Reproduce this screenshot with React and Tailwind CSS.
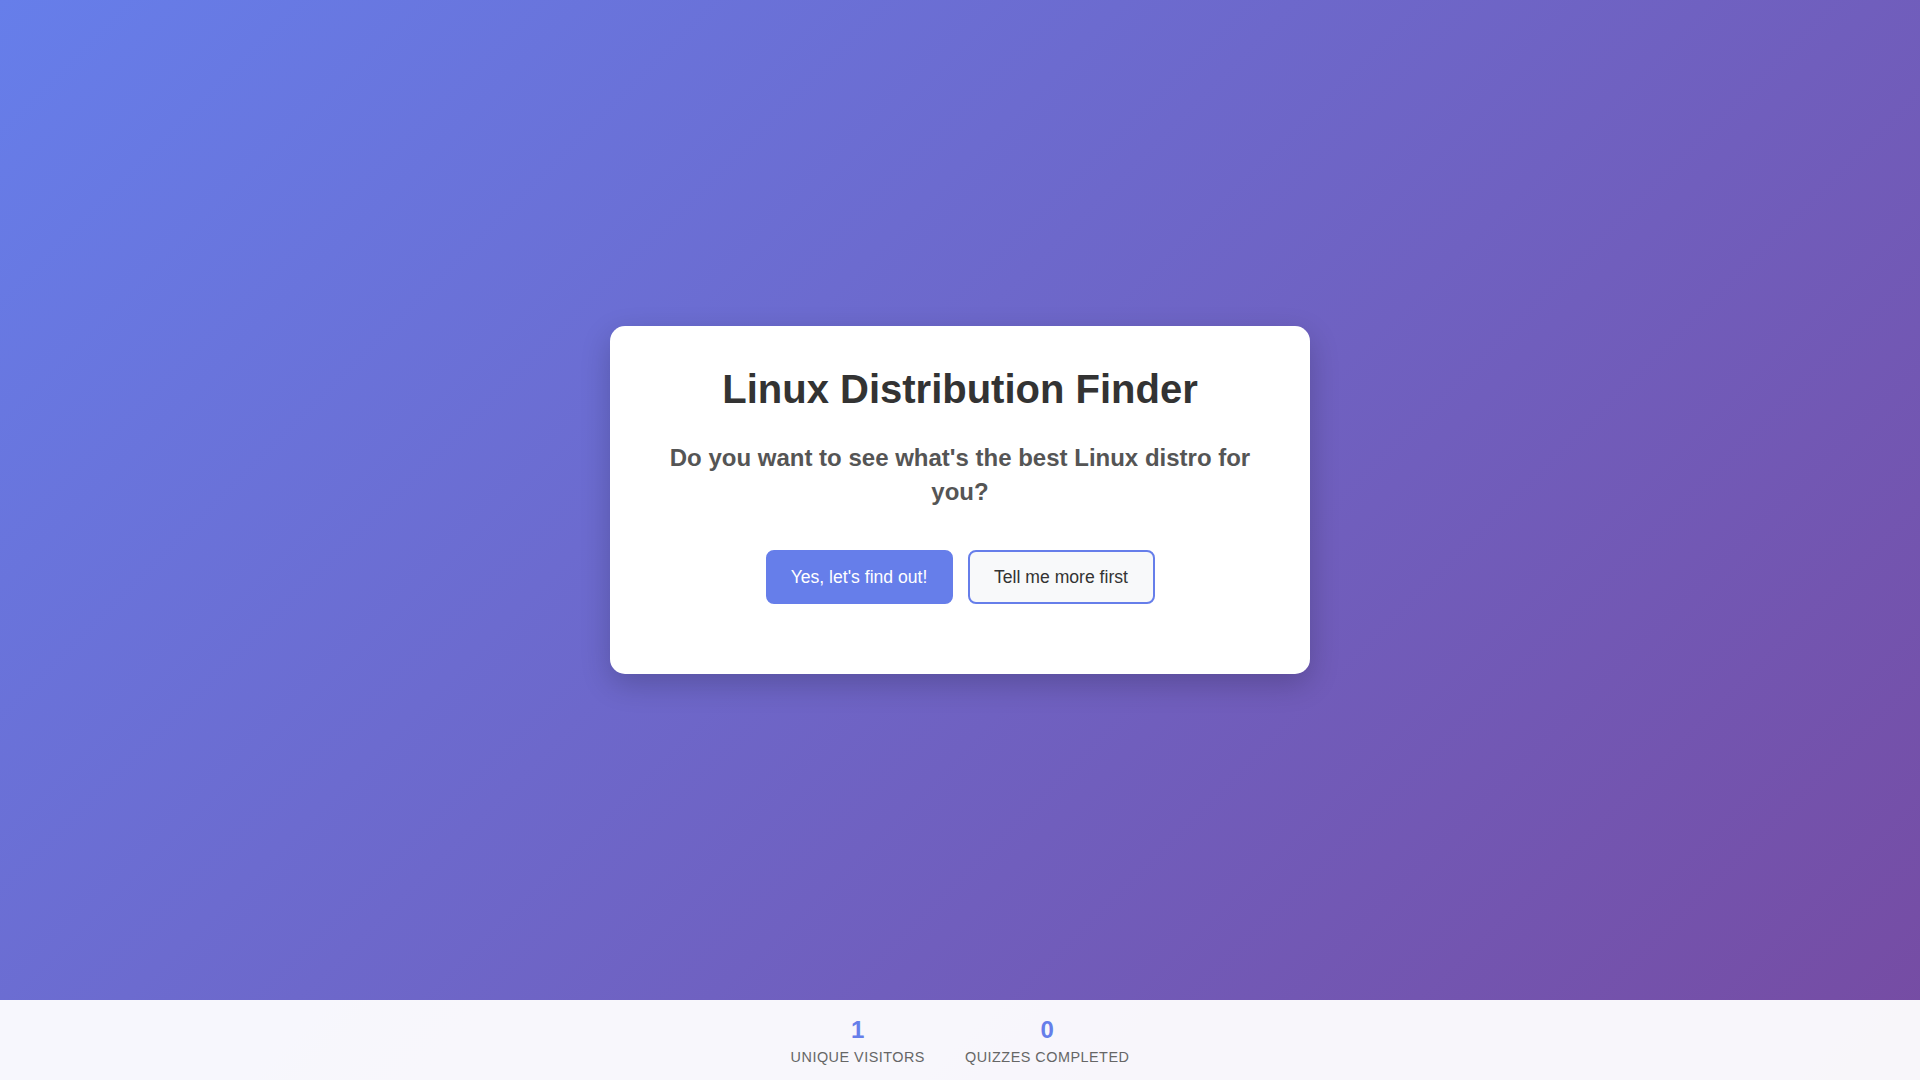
export default function App() {
  return (
    <div className="min-h-screen flex flex-col bg-[linear-gradient(135deg,#667eea_0%,#764ba2_100%)] font-['Liberation_Sans',Arial,sans-serif]">
      <main className="h-[1000px] flex items-center justify-center">
        <div className="w-[700px] bg-white rounded-[15px] shadow-[0_10px_30px_rgba(0,0,0,0.2)] px-10 pt-10 pb-[70px] text-center">
          <h1 className="text-[40px] leading-[1.15] font-bold text-[#333] mb-[29px]">Linux Distribution Finder</h1>
          <p className="text-[24px] leading-[1.45] font-bold text-[#555] mb-[40px]">
            Do you want to see what's the best Linux distro for you?
          </p>
          <div className="flex justify-center gap-[15px]">
            <button className="w-[187px] py-[15px] text-[17.6px] leading-[1.15] rounded-lg border-2 border-[#667eea] bg-[#667eea] text-white">
              Yes, let's find out!
            </button>
            <button className="w-[187px] py-[15px] text-[17.6px] leading-[1.15] rounded-lg border-2 border-[#667eea] bg-[#f8f9fa] text-[#333]">
              Tell me more first
            </button>
          </div>
        </div>
      </main>
      <footer className="h-20 bg-[rgba(255,255,255,0.95)] pt-[16px] flex justify-center gap-10">
        <div className="flex flex-col items-center">
          <div className="text-[24px] leading-[1.2] font-bold text-[#667eea] mb-[4px]">1</div>
          <div className="text-[14.4px] leading-[1.2] tracking-[0.5px] uppercase text-[#666]">Unique Visitors</div>
        </div>
        <div className="flex flex-col items-center">
          <div className="text-[24px] leading-[1.2] font-bold text-[#667eea] mb-[4px]">0</div>
          <div className="text-[14.4px] leading-[1.2] tracking-[0.5px] uppercase text-[#666]">Quizzes Completed</div>
        </div>
      </footer>
    </div>
  )
}
